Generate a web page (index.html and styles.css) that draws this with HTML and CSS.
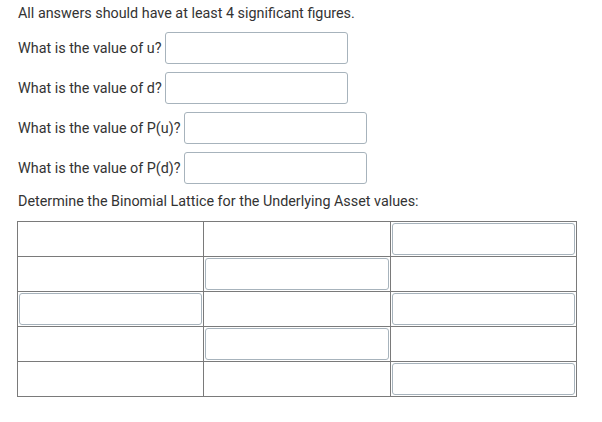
FILE: index.html
```html
<!DOCTYPE html>
<html>
<head>
<meta charset="utf-8">
<link rel="stylesheet" href="styles.css">
</head>
<body>
<div class="page">
  <p class="intro">All answers should have at least 4 significant figures.</p>
  <div class="q">What is the value of u? <input class="ans" type="text"></div>
  <div class="q">What is the value of d? <input class="ans" type="text"></div>
  <div class="q">What is the value of P(u)? <input class="ans" type="text"></div>
  <div class="q">What is the value of P(d)? <input class="ans" type="text"></div>
  <p class="lead">Determine the Binomial Lattice for the Underlying Asset values:</p>
  <table class="lattice">
    <tr><td></td><td></td><td><input class="cell-in" type="text"></td></tr>
    <tr><td></td><td><input class="cell-in" type="text"></td><td></td></tr>
    <tr><td><input class="cell-in" type="text"></td><td></td><td><input class="cell-in" type="text"></td></tr>
    <tr><td></td><td><input class="cell-in" type="text"></td><td></td></tr>
    <tr><td></td><td></td><td><input class="cell-in" type="text"></td></tr>
  </table>
</div>
</body>
</html>
```

FILE: styles.css
```css
html, body {
  margin: 0;
  padding: 0;
  background: #ffffff;
}
.page {
  padding: 4px 17px 0 18px;
  font-family: Roboto, "Liberation Sans", sans-serif;
  font-size: 14.35px;
  color: #333333;
}
.intro {
  margin: 0;
  line-height: 20px;
  height: 24px;
}
.q {
  height: 40px;
  display: flex;
  align-items: center;
  white-space: pre;
}
.ans {
  width: 183px;
  height: 32px;
  box-sizing: border-box;
  border: 1px solid #a7b3bc;
  border-radius: 3px;
  margin: 0;
  padding: 0 6px;
  font: inherit;
  background: #fff;
}
.lead {
  margin: 0;
  line-height: 20px;
  padding-top: 4px;
  height: 29px;
}
.lattice {
  margin-left: -1px;
  border-collapse: collapse;
  width: 560px;
  table-layout: fixed;
}
.lattice td {
  border: 1px solid #7a7a7a;
  padding: 1px;
  height: 32px;
  box-sizing: content-box;
}
.cell-in {
  display: block;
  width: 100%;
  height: 32px;
  box-sizing: border-box;
  border: 1px solid #a7b3bc;
  border-radius: 3px;
  margin: 0;
  padding: 0 6px;
  font: inherit;
  background: #fff;
}
```
